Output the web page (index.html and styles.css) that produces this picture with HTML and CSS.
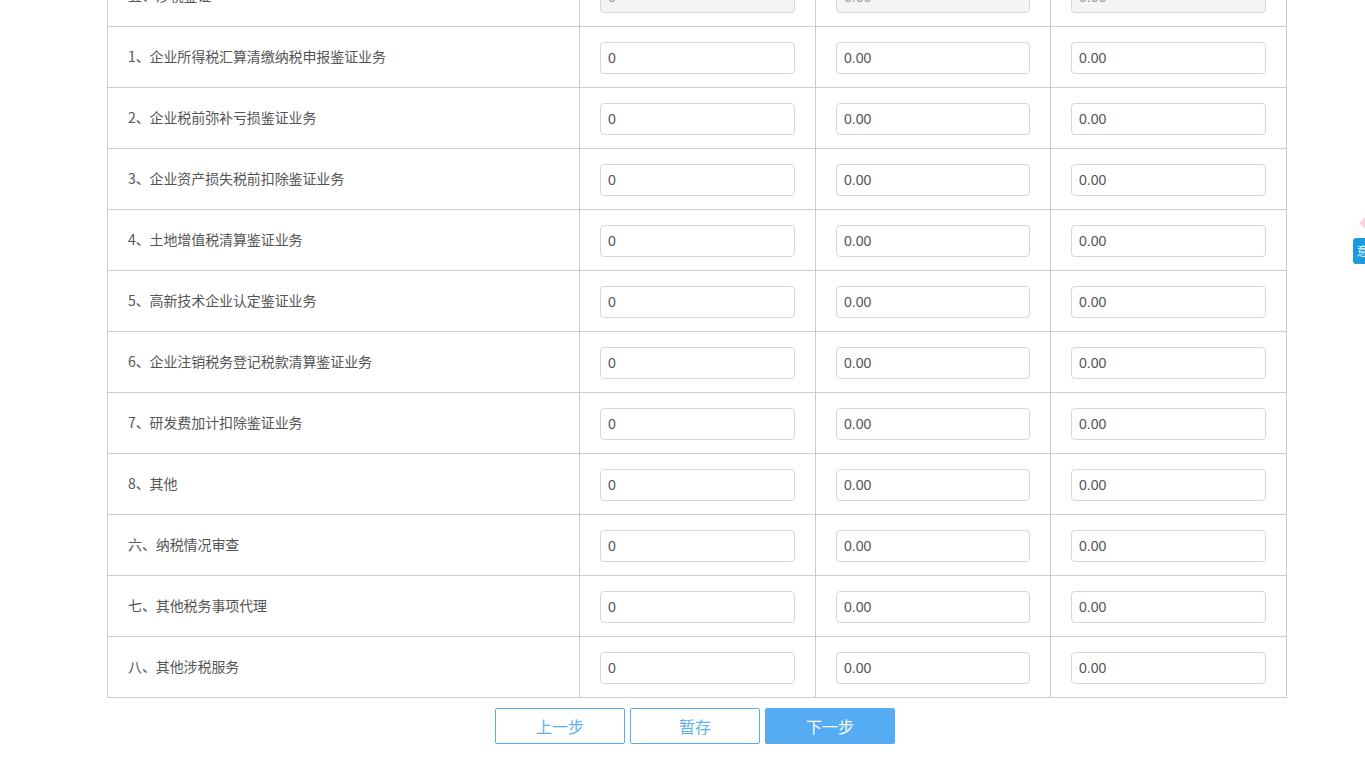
FILE: index.html
```html
<!DOCTYPE html>
<html lang="zh-CN">
<head>
<meta charset="utf-8">
<title>涉税服务</title>
<link rel="stylesheet" href="styles.css">
</head>
<body>
<div class="page">
  <div class="grid">
    <div class="cell label">五、涉税鉴证</div>
    <div class="cell"><input class="inp disabled" value="0" disabled></div>
    <div class="cell"><input class="inp disabled" value="0.00" disabled></div>
    <div class="cell"><input class="inp disabled" value="0.00" disabled></div>

    <div class="cell label">1、企业所得税汇算清缴纳税申报鉴证业务</div>
    <div class="cell"><input class="inp" value="0"></div>
    <div class="cell"><input class="inp" value="0.00"></div>
    <div class="cell"><input class="inp" value="0.00"></div>

    <div class="cell label">2、企业税前弥补亏损鉴证业务</div>
    <div class="cell"><input class="inp" value="0"></div>
    <div class="cell"><input class="inp" value="0.00"></div>
    <div class="cell"><input class="inp" value="0.00"></div>

    <div class="cell label">3、企业资产损失税前扣除鉴证业务</div>
    <div class="cell"><input class="inp" value="0"></div>
    <div class="cell"><input class="inp" value="0.00"></div>
    <div class="cell"><input class="inp" value="0.00"></div>

    <div class="cell label">4、土地增值税清算鉴证业务</div>
    <div class="cell"><input class="inp" value="0"></div>
    <div class="cell"><input class="inp" value="0.00"></div>
    <div class="cell"><input class="inp" value="0.00"></div>

    <div class="cell label">5、高新技术企业认定鉴证业务</div>
    <div class="cell"><input class="inp" value="0"></div>
    <div class="cell"><input class="inp" value="0.00"></div>
    <div class="cell"><input class="inp" value="0.00"></div>

    <div class="cell label">6、企业注销税务登记税款清算鉴证业务</div>
    <div class="cell"><input class="inp" value="0"></div>
    <div class="cell"><input class="inp" value="0.00"></div>
    <div class="cell"><input class="inp" value="0.00"></div>

    <div class="cell label">7、研发费加计扣除鉴证业务</div>
    <div class="cell"><input class="inp" value="0"></div>
    <div class="cell"><input class="inp" value="0.00"></div>
    <div class="cell"><input class="inp" value="0.00"></div>

    <div class="cell label">8、其他</div>
    <div class="cell"><input class="inp" value="0"></div>
    <div class="cell"><input class="inp" value="0.00"></div>
    <div class="cell"><input class="inp" value="0.00"></div>

    <div class="cell label">六、纳税情况审查</div>
    <div class="cell"><input class="inp" value="0"></div>
    <div class="cell"><input class="inp" value="0.00"></div>
    <div class="cell"><input class="inp" value="0.00"></div>

    <div class="cell label">七、其他税务事项代理</div>
    <div class="cell"><input class="inp" value="0"></div>
    <div class="cell"><input class="inp" value="0.00"></div>
    <div class="cell"><input class="inp" value="0.00"></div>

    <div class="cell label">八、其他涉税服务</div>
    <div class="cell"><input class="inp" value="0"></div>
    <div class="cell"><input class="inp" value="0.00"></div>
    <div class="cell"><input class="inp" value="0.00"></div>
  </div>

  <div class="actions">
    <button class="btn btn-outline">上一步</button>
    <button class="btn btn-outline">暂存</button>
    <button class="btn btn-primary">下一步</button>
  </div>
</div>

<div class="side-widget">
  <span class="side-heart"></span>
  <span class="side-tab">意见</span>
</div>
</body>
</html>
```

FILE: styles.css
```css
html, body {
  margin: 0;
  padding: 0;
  background: #ffffff;
  overflow: hidden;
}

body {
  font-family: "Liberation Sans", "Noto Sans CJK SC", Arial, sans-serif;
  font-size: 14px;
  color: #555555;
}

.page {
  width: 1180px;
  margin-left: 107px;
  margin-top: -35px;
}

.grid {
  display: grid;
  grid-template-columns: 472px 236px 235px 236px;
  border-left: 1px solid #cccccc;
  border-top: 1px solid #cccccc;
  width: 1180px;
  box-sizing: border-box;
}

.cell {
  box-sizing: border-box;
  height: 61px;
  border-right: 1px solid #cccccc;
  border-bottom: 1px solid #cccccc;
  padding: 15px 20px 13px 20px;
  display: flex;
  align-items: center;
}

.cell.label {
  padding-top: 0;
  padding-bottom: 2px;
  font-family: "Noto Sans CJK SC", "Liberation Sans", sans-serif;
  font-size: 14px;
  color: #555555;
  letter-spacing: -0.1px;
}

.inp {
  box-sizing: border-box;
  width: 100%;
  height: 32px;
  margin: 0;
  padding: 0 7px;
  border: 1px solid #d6d6d6;
  border-radius: 4px;
  background: #ffffff;
  font-family: "Liberation Sans", Arial, sans-serif;
  font-size: 14px;
  color: #555555;
  outline: none;
}

.inp.disabled {
  background: #f3f4f6;
  color: #999999;
  -webkit-text-fill-color: #999999;
  opacity: 1;
}

.actions {
  display: flex;
  justify-content: center;
  gap: 5px;
  padding-top: 10px;
  padding-right: 4px;
}

.btn {
  box-sizing: border-box;
  width: 130px;
  height: 36px;
  border-radius: 2px;
  font-family: "Noto Sans CJK SC", "Liberation Sans", sans-serif;
  font-size: 16px;
  cursor: pointer;
  padding: 0;
}

.btn-outline {
  background: #ffffff;
  border: 1px solid #55acf2;
  color: #60b0f0;
}

.btn-primary {
  background: #55acf3;
  border: 1px solid #55acf3;
  color: #ffffff;
}

.side-widget {
  position: fixed;
  left: 1353px;
  top: 216px;
  width: 30px;
}

.side-heart {
  position: absolute;
  left: 8px;
  top: 2px;
  width: 10px;
  height: 10px;
  background: #f7d3de;
  transform: rotate(45deg);
  border-radius: 3px;
}

.side-tab {
  position: absolute;
  left: 0;
  top: 22px;
  width: 24px;
  height: 26px;
  background: #1a9be0;
  border-radius: 3px;
  color: #ffffff;
  font-family: "Noto Sans CJK SC", sans-serif;
  font-size: 12px;
  line-height: 26px;
  padding-left: 4px;
  box-sizing: border-box;
  overflow: hidden;
  white-space: nowrap;
}
```
